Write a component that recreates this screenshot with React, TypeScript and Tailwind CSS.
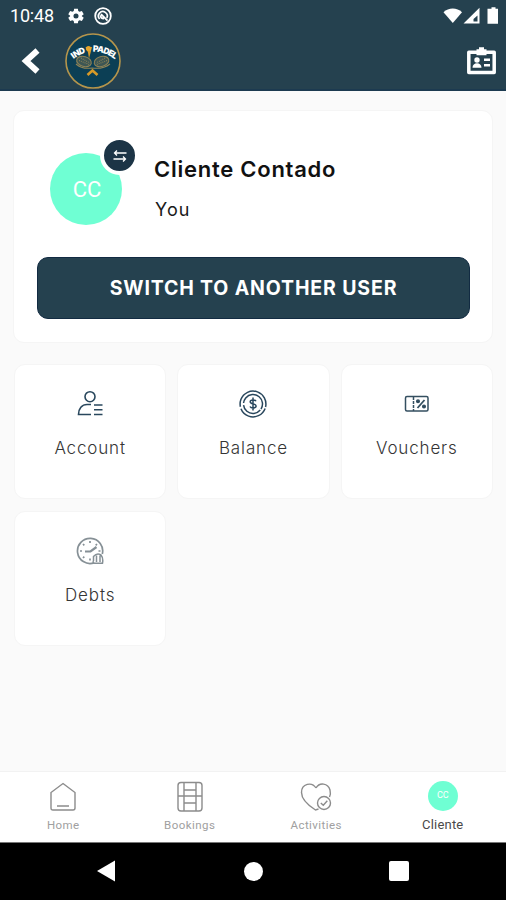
import React from "react";

function StatusBar() {
  return (
    <div className="flex h-8 items-center justify-between pl-[10px] pr-[7px] text-white">
      <div className="flex items-center">
        <span className="w-[58px] font-[Roboto,sans-serif] text-[18px] leading-8 tracking-[-0.2px]">10:48</span>
        <svg width="16" height="16" viewBox="0 0 24 24" fill="currentColor">
          <path
            fillRule="evenodd"
            d="M9.200 1h5.600l.6 3.600 2 1.200 3.400-1.300L23.600 9.300l-2.800 2.300v.8l2.800 2.300-2.800 4.800-3.400-1.300-2 1.200-.6 3.600H9.200l-.6-3.600-2-1.200-3.400 1.300L.4 14.700l2.800-2.300v-.8L.4 9.300l2.800-4.800 3.400 1.300 2-1.200zM12 8.200a3.800 3.800 0 1 0 0 7.600 3.800 3.800 0 0 0 0-7.600z"
          />
        </svg>
        <svg className="ml-[10px]" width="18" height="18" viewBox="0 0 18 18" fill="none" stroke="currentColor">
          <circle cx="9" cy="9" r="7.800" strokeWidth="1.800" />
          <path d="M5.600 12A4.400 4.400 0 1 1 12.800 11" strokeWidth="1.700" />
          <path d="M7 7.200l6.500 6.500M6.500 8.200Q6.500 11.500 10 11.500" strokeWidth="1.800" />
        </svg>
      </div>
      <svg width="56" height="20" viewBox="0 0 56 20" fill="currentColor">
        <path d="M0.500 6.200C5.500 1.400 14 1.400 19 6.200L9.800 17z" />
        <path fillRule="evenodd" d="M36.500 1.800V17.500H20.500zM34.500 9.500v6h-4v-2.500z" />
        <path d="M48.500 1.200h4v1.500h2.500v15H44.500v-15h4z" />
      </svg>
    </div>
  );
}

function Logo() {
  return (
    <svg width="58" height="58" viewBox="0 0 58 58" fill="none">
      <defs>
        <path id="logo-arc" d="M9.500 27Q29 12 50.500 27" />
      </defs>
      <circle cx="29" cy="29" r="27" fill="#0c3f55" stroke="#b5954c" strokeWidth="1.600" />
      <g fill="#fff" fontFamily="Inter, sans-serif" fontSize="8.500" fontWeight="900">
        <text>
          <textPath href="#logo-arc" startOffset="0" textLength="14">IND</textPath>
        </text>
        <text>
          <textPath href="#logo-arc" startOffset="21" textLength="24">PADEL</textPath>
        </text>
      </g>
      <path d="M21.500 15h6.500l-1.500 6-1.500 5.500-1-6z" fill="#d89a28" />
      <circle cx="24.500" cy="16.500" r="2.600" fill="#e3a52d" />
      <g stroke="#8d8256" strokeWidth="1.100">
        <ellipse cx="20" cy="29.500" rx="7.500" ry="5" transform="rotate(16 20 29.500)" fill="#3d5654" />
        <ellipse cx="37.500" cy="29.500" rx="7.500" ry="5" transform="rotate(-16 37.500 29.500)" fill="#3d5654" />
        <path d="M15 28.500l10 4M17 26l9 5M43 28.500l-10 4M41 26l-9 5" strokeDasharray="1 1" />
        <path d="M12 32Q18 37.500 28 36Q39 37.500 46 32" />
      </g>
      <path d="M23.500 43l5-4.500 5 4.500" stroke="#d89a28" strokeWidth="2.600" />
    </svg>
  );
}

function Header() {
  return (
    <header className="h-[91px] shrink-0 border-b-2 border-[#1c3a50] bg-[#25414f]">
      <StatusBar />
      <div className="flex h-[57px] items-center pl-[20px] pr-[9px] text-white">
        <svg width="20" height="26" viewBox="0 0 20 26" fill="none" stroke="currentColor" strokeWidth="6">
          <path d="M17.500 2.500L6 13l11.500 10.500" />
        </svg>
        <div className="ml-[24px]">
          <Logo />
        </div>
        <svg className="ml-auto" width="31" height="28" viewBox="0 0 31 28">
          <path d="M2.800 5.200h25.400v20.300H2.800z" fill="none" stroke="#fff" strokeWidth="3.500" strokeLinejoin="round" />
          <path d="M10.500 2.200h2.500V.2h5v2h2.500v6h-10z" fill="#fff" />
          <circle cx="11" cy="13" r="2.700" fill="#fff" />
          <path d="M6.500 20.800c0-3 2-4.500 4.500-4.500s4.500 1.500 4.500 4.500zM18 11.500h6v2.500h-6zM18 17h6v2.500h-6z" fill="#fff" />
        </svg>
      </div>
    </header>
  );
}

function ProfileCard() {
  return (
    <section className="mx-[13px] mt-[19px] h-[233px] rounded-[11px] border border-[#f5f5f5] bg-white px-[23px] pt-[29px]">
      <div className="flex h-[117px]">
        <div className="relative ml-[13px] mt-[13px] flex size-[72px] items-center justify-center rounded-full bg-[#6fffd3]">
          <span className="ml-[2px] font-[Roboto,sans-serif] text-[22px] tracking-[-0.1px] text-white">CC</span>
          <div className="absolute left-[50px] top-[-17px] flex size-[39px] items-center justify-center rounded-full border-4 border-white bg-[#1c3446]">
            <svg width="14" height="12" viewBox="0 0 14 12" fill="none" stroke="#fff" strokeWidth="1.300">
              <path d="M13.500 3H1.500M4 .5L1.500 3 4 5.500M.5 9h12M10 6.500L12.500 9 10 11.500" />
            </svg>
          </div>
        </div>
        <div className="ml-[32px] pt-[14px] text-black">
          <h1 className="whitespace-nowrap text-[22px] font-semibold leading-[30px] tracking-[0.75px] text-[#111]">
            Cliente Contado
          </h1>
          <p className="ml-[1px] mt-[12px] text-[18px] leading-[28px] tracking-[1.1px] text-[#1a1a1a]">You</p>
        </div>
      </div>
      <button className="flex h-[62px] w-[433px] items-center justify-center rounded-[11px] border border-[#122b42] bg-[#25414f] pt-[2px] text-[19.500px] font-bold tracking-[0.85px] text-white">
        SWITCH TO ANOTHER USER
      </button>
    </section>
  );
}

const AccountIcon = () => (
  <svg width="28" height="28" viewBox="0 0 28 28" fill="none" stroke="#29475d" strokeWidth="1.600">
    <circle cx="14" cy="6.700" r="5" />
    <path d="M15 14.500H11c-5 0-8.500 4-8.500 10H15" />
    <path d="M18 15h8.500M18 19.800h8.500M18 24.500h8.500" />
  </svg>
);

const BalanceIcon = () => (
  <svg width="28" height="28" viewBox="0 0 28 28" fill="none" stroke="#29475d" strokeWidth="1.500">
    <circle cx="14" cy="14" r="12.900" strokeDasharray="31 2 46 2" transform="rotate(20 14 14)" />
    <circle cx="14" cy="14" r="9.500" strokeDasharray="22 2 34 2" transform="rotate(40 14 14)" />
    <path d="M17 11.200c-.8-1.700-5.800-1.900-5.800.5 0 2.800 5.900 1.600 5.900 4.400 0 2.600-5.300 2.300-6.100.4M14 7.500v13" />
  </svg>
);

const VoucherIcon = () => (
  <svg width="28" height="28" viewBox="0 0 28 28" fill="none" stroke="#344f60" strokeWidth="1.500">
    <rect x="2.500" y="6.500" width="22.500" height="14.500" rx="1.500" />
    <path d="M10.500 7v14" strokeDasharray="3 1" />
    <path d="M21.500 10l-7 8" strokeWidth="1.800" />
    <circle cx="15" cy="11.200" r="1.300" fill="#29475d" />
    <circle cx="21" cy="16.500" r="1.300" fill="#29475d" />
  </svg>
);

const DebtIcon = () => (
  <svg width="28" height="28" viewBox="0 0 28 28" fill="none" stroke="#869096" strokeWidth="1.700">
    <path d="M18 25.900A12.600 12.600 0 1 1 26.300 17" />
    <path d="M14 4v2M14 21.500v2M4 14h2M22.500 14h2M7 7l1.300 1.300M21 7l-1.300 1.300M7 21l1.300-1.300" />
    <path d="M9 14.500h5.500l6-4.500" strokeWidth="2.200" />
    <path d="M17.500 24v-4.500q3.500-4 7.500-1.500 2.500 3 1.500 8.200h-8q-2-.5-1-2.200M20.500 18.500v6.500M24 18.500v6.500" strokeWidth="1.500" />
  </svg>
);

const tiles = [
  { label: "Account", icon: <AccountIcon /> },
  { label: "Balance", icon: <BalanceIcon /> },
  { label: "Vouchers", icon: <VoucherIcon /> },
  { label: "Debts", icon: <DebtIcon /> },
];

function Tiles() {
  return (
    <div className="ml-[14px] mt-[21px] grid w-[479px] grid-cols-3 gap-x-[11px] gap-y-[12px]">
      {tiles.map((tile) => (
        <div
          key={tile.label}
          className="flex h-[135px] flex-col items-center rounded-[11px] border border-[#f5f5f5] bg-white pt-[25px]"
        >
          {tile.icon}
          <span className="mt-[17px] text-[17px] font-light leading-[26px] tracking-[0.85px] text-[#353535]">
            {tile.label}
          </span>
        </div>
      ))}
    </div>
  );
}

function BottomNav() {
  return (
    <nav className="grid h-[71px] shrink-0 grid-cols-4 border-t border-[#f2f2f2] bg-white font-[Roboto,sans-serif] text-[11.500px] tracking-[0.45px] text-[#a0a0a0]">
      <div className="flex flex-col items-center pt-[9px]">
        <svg width="30" height="32" viewBox="0 0 30 32" fill="none" stroke="#8c8c8c" strokeWidth="1.400">
          <path d="M15 2.500L27 11.500V27q0 2-2 2H5q-2 0-2-2V11.500zM9 25h12" />
        </svg>
        <span className="mt-[4px] leading-4">Home</span>
      </div>
      <div className="flex flex-col items-center pt-[9px]">
        <svg width="30" height="32" viewBox="0 0 30 32" fill="none" stroke="#8c8c8c" strokeWidth="1.400">
          <rect x="3" y="1.500" width="24" height="28.500" rx="3" />
          <path d="M9 1.500v28.500M21 1.500v28.500M3 15h24M9 9h12M9 22h12" />
        </svg>
        <span className="mt-[4px] leading-4">Bookings</span>
      </div>
      <div className="flex flex-col items-center pt-[9px]">
        <svg width="32" height="32" viewBox="0 0 32 32" fill="none" stroke="#8c8c8c" strokeWidth="1.400">
          <path d="M16 7C12 .5 1.500 2.500 1.500 11.500c0 7 7 13 14 17.500l3-1M29.500 16c1-2 1-5 .5-7C28 2 19.500 1 16 7" />
          <circle cx="24" cy="22" r="6.500" />
          <path d="M20.800 22l2.500 2.300 4-4.500" />
        </svg>
        <span className="mt-[4px] leading-4">Activities</span>
      </div>
      <div className="flex flex-col items-center pt-[9px]">
        <div className="flex size-[30px] items-center justify-center rounded-full bg-[#6fffd3] text-[9px] tracking-tight text-white">
          CC
        </div>
        <span className="mt-[6px] text-[13px] leading-4 tracking-[0.2px] text-[#4a4a4a]">Cliente</span>
      </div>
    </nav>
  );
}

function SystemBar() {
  return (
    <div className="flex h-[58px] shrink-0 items-center justify-between border-t border-[#777] bg-black pb-px pl-[96px] pr-[97px]">
      <svg width="20" height="22" viewBox="0 0 20 22">
        <path d="M1 11L19 .5v21z" fill="#fff" />
      </svg>
      <div className="ml-[2px] size-[19px] rounded-full bg-white" />
      <div className="size-[20px] rounded-[2px] bg-white" />
    </div>
  );
}

export default function App() {
  return (
    <div className="flex h-[900px] w-[506px] flex-col overflow-hidden bg-[#fafafa] font-[Inter,sans-serif]">
      <Header />
      <main className="flex-1">
        <ProfileCard />
        <Tiles />
      </main>
      <BottomNav />
      <SystemBar />
    </div>
  );
}
